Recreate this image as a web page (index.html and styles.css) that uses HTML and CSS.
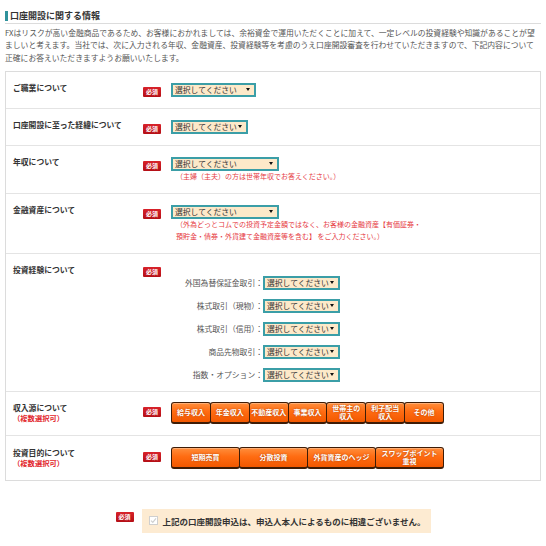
FILE: index.html
```html
<!DOCTYPE html>
<html lang="ja">
<head>
<meta charset="utf-8">
<title>口座開設に関する情報</title>
<link rel="stylesheet" href="styles.css">
</head>
<body>
<div class="page">
  <h2 class="title"><span class="title-text">口座開設に関する情報</span></h2>
  <p class="intro">FXはリスクが高い金融商品であるため、お客様におかれましては、余裕資金で運用いただくことに加えて、一定レベルの投資経験や知識があることが望<br>ましいと考えます。当社では、次に入力される年収、金融資産、投資経験等を考慮のうえ口座開設審査を行わせていただきますので、下記内容について<br>正確にお答えいただきますようお願いいたします。</p>

  <div class="form">
    <div class="row">
      <div class="label">ご職業について</div>
      <div class="badge-cell"><span class="badge">必須</span></div>
      <div class="field"><span class="select sel-m">選択してください</span></div>
    </div>

    <div class="row">
      <div class="label">口座開設に至った経緯について</div>
      <div class="badge-cell"><span class="badge">必須</span></div>
      <div class="field"><span class="select sel-s">選択してください</span></div>
    </div>

    <div class="row">
      <div class="label">年収について</div>
      <div class="badge-cell"><span class="badge">必須</span></div>
      <div class="field">
        <span class="select sel-l">選択してください</span>
        <p class="note">（主婦（主夫）の方は世帯年収でお答えください。）</p>
      </div>
    </div>

    <div class="row">
      <div class="label">金融資産について</div>
      <div class="badge-cell"><span class="badge">必須</span></div>
      <div class="field">
        <span class="select sel-l">選択してください</span>
        <p class="note">（外為どっとコムでの投資予定金額ではなく、お客様の金融資産【有価証券・<br>預貯金・債券・外貨建て金融資産等を含む】 をご入力ください。）</p>
      </div>
    </div>

    <div class="row row-exp">
      <div class="label">投資経験について</div>
      <div class="badge-cell"><span class="badge badge-top">必須</span></div>
      <div class="field">
        <div class="sublist">
          <span class="sublabel">外国為替保証金取引：</span><span class="select sel-s">選択してください</span>
          <span class="sublabel">株式取引（現物）：</span><span class="select sel-s">選択してください</span>
          <span class="sublabel">株式取引（信用）：</span><span class="select sel-s">選択してください</span>
          <span class="sublabel">商品先物取引：</span><span class="select sel-s">選択してください</span>
          <span class="sublabel">指数・オプション：</span><span class="select sel-s">選択してください</span>
        </div>
      </div>
    </div>

    <div class="row">
      <div class="label label-multi">収入源について<span class="multi">（複数選択可）</span></div>
      <div class="badge-cell"><span class="badge">必須</span></div>
      <div class="field">
        <div class="btns">
          <span class="btn">給与収入</span>
          <span class="btn">年金収入</span>
          <span class="btn">不動産収入</span>
          <span class="btn">事業収入</span>
          <span class="btn">世帯主の<br>収入</span>
          <span class="btn">利子配当<br>収入</span>
          <span class="btn">その他</span>
        </div>
      </div>
    </div>

    <div class="row row-last">
      <div class="label label-multi">投資目的について<span class="multi">（複数選択可）</span></div>
      <div class="badge-cell"><span class="badge">必須</span></div>
      <div class="field">
        <div class="btns">
          <span class="btn">短期売買</span>
          <span class="btn">分散投資</span>
          <span class="btn">外貨資産のヘッジ</span>
          <span class="btn">スワップポイント<br>重視</span>
        </div>
      </div>
    </div>
  </div>

  <div class="agree">
    <span class="badge badge-agree">必須</span>
    <label class="agree-box">
      <span class="check"><svg width="7" height="7" viewBox="0 0 7 7"><polyline points="1,3.6 2.8,5.4 6,1.4" fill="none" stroke="#cfcfcf" stroke-width="1.2"/></svg></span>
      <span class="agree-text">上記の口座開設申込は、申込人本人によるものに相違ございません。</span>
    </label>
  </div>
</div>
</body>
</html>
```

FILE: styles.css
```css
* {
  box-sizing: border-box;
}

body {
  margin: 0;
  background: #fff;
  color: #333;
  font-family: "Noto Sans CJK JP", "Noto Sans", sans-serif;
}

.page {
  width: 546px;
  padding: 11px 5px 0 5px;
}

.title {
  display: flex;
  margin: 0;
  padding-bottom: 2px;
  border-bottom: 1px solid #dcdcdc;
  font-size: 9px;
  font-weight: bold;
  line-height: 10px;
  color: #333;
}

.title-text {
  display: block;
  border-left: 3px solid #2f929c;
  padding-left: 2px;
}

.intro {
  margin: 3px 0 0;
  font-size: 7.8px;
  line-height: 12.3px;
  color: #555;
  white-space: nowrap;
}

.form {
  margin-top: 7px;
  border: 1px solid #dcdcdc;
}

.row {
  display: grid;
  grid-template-columns: 137px 28px 1fr;
  padding: 10px 0 11px;
  border-top: 1px solid #e4e4e4;
}

.row:first-child {
  border-top: none;
}

.row-exp {
  padding-bottom: 9px;
}

.row-last {
  padding-top: 11px;
}

.label {
  padding-left: 7px;
  font-size: 7.8px;
  font-weight: bold;
  line-height: 12px;
  color: #333;
}

.label-multi {
  display: flex;
  flex-direction: column;
  line-height: 11px;
}

.multi {
  font-size: 7.3px;
  color: #e2262b;
}

.badge-cell {
  display: flex;
  align-items: flex-start;
}

.badge {
  display: inline-flex;
  align-items: center;
  justify-content: center;
  width: 18px;
  height: 10px;
  margin-top: 5px;
  background: linear-gradient(#d8222a, #b40f16);
  border-radius: 1px;
  color: #fff;
  font-size: 6px;
  font-weight: bold;
  line-height: 1;
}

.badge-top {
  margin-top: 3px;
}

.field {
  display: flex;
  flex-direction: column;
  align-items: flex-start;
}

.select {
  display: flex;
  align-items: center;
  height: 14px;
  margin-top: 1px;
  padding-left: 2px;
  border: 2px solid #3b9ea7;
  background: #fde9c9;
  font-size: 7.8px;
  line-height: 1;
  color: #333;
  white-space: nowrap;
}

.select::after {
  content: "";
  margin-left: auto;
  margin-right: 4px;
  border-left: 2.5px solid transparent;
  border-right: 2.5px solid transparent;
  border-top: 3.5px solid #111;
}

.sel-s {
  width: 77px;
}

.sel-m {
  width: 85px;
}

.sel-l {
  width: 108px;
}

.note {
  margin: -1px 0 0;
  padding-left: 5px;
  font-size: 7px;
  line-height: 12px;
  color: #e63a3f;
  white-space: nowrap;
}

.sublist {
  display: grid;
  grid-template-columns: 92px 77px;
  row-gap: 9px;
  margin-top: 12px;
}

.sublabel {
  display: flex;
  align-items: center;
  justify-content: flex-end;
  height: 14px;
  font-size: 7.8px;
  color: #555;
  white-space: nowrap;
}

.sublist .select {
  margin-top: 0;
}

.btns {
  display: flex;
  width: 273px;
}

.btn {
  flex: 1 1 0;
  display: flex;
  align-items: center;
  justify-content: center;
  height: 22px;
  border: 1px solid #3e1c06;
  border-bottom-width: 2px;
  border-radius: 3px;
  background: linear-gradient(#ff8e3c 0%, #ff6c12 45%, #f25800 100%);
  box-shadow: inset 0 1px 0 rgba(255, 255, 255, 0.3);
  color: #fff;
  font-size: 7px;
  font-weight: bold;
  line-height: 8.6px;
  text-align: center;
  text-shadow: 0 0 2px #a83c00;
  white-space: nowrap;
}

.btn + .btn {
  margin-left: -1px;
}

.agree {
  display: flex;
  justify-content: center;
  align-items: flex-start;
  gap: 8px;
  margin-top: 28px;
}

.badge-agree {
  margin-top: 3px;
}

.agree-box {
  display: flex;
  align-items: center;
  height: 24px;
  padding: 0 5px 0 7px;
  background: #fdebd2;
}

.check {
  display: flex;
  align-items: center;
  justify-content: center;
  width: 9px;
  height: 9px;
  border: 1px solid #cfcfcf;
  background: #fff;
}

.agree-text {
  margin-left: 5px;
  font-size: 8.5px;
  font-weight: bold;
  color: #333;
  white-space: nowrap;
}
```
